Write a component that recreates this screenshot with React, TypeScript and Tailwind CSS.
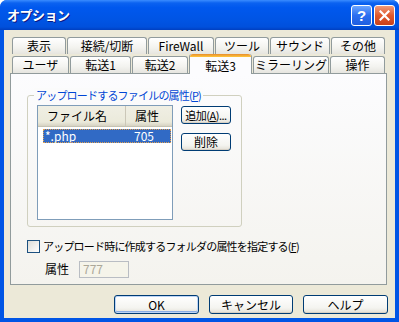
import React from 'react'

const FONT = '[font-family:"Noto_Sans_CJK_JP","Noto_Sans",sans-serif]'

const ROW1 = [
  { label: '表示', w: 'w-[54px]' },
  { label: '接続/切断', w: 'w-[80px]' },
  { label: 'FireWall', w: 'w-[66px]' },
  { label: 'ツール', w: 'w-[54px]' },
  { label: 'サウンド', w: 'w-[60px]' },
  { label: 'その他', w: 'w-[54px]' },
]

const ROW2 = [
  { label: 'ユーザ', w: 'w-[57px]' },
  { label: '転送1', w: 'w-[61px]' },
  { label: '転送2', w: 'w-[56px]' },
  { label: '転送3', w: 'w-[63px]', active: true },
  { label: 'ミラーリング', w: 'w-[76px]' },
  { label: '操作', w: 'w-[55px]' },
]

function Tab({ label, w, active }: { label: string; w: string; active?: boolean }) {
  if (active) {
    return (
      <div className={`${w} relative z-10 -mb-[1px] h-[20px] flex flex-col rounded-t-[3px] border-x border-[#919b9c] bg-[#fcfcfe]`}>
        <div className="h-[3px] rounded-t-[3px] bg-[linear-gradient(to_bottom,#e68b2c,#ffc83c)]" />
        <div className="flex-1 flex items-center justify-center leading-none">{label}</div>
      </div>
    )
  }
  return (
    <div
      className={`${w} h-[17px] flex items-center justify-center rounded-t-[3px] border border-b-0 border-[#919b9c] bg-[linear-gradient(to_bottom,#ffffff,#f3f3ef_60%,#e6e5df)] leading-none`}
    >
      {label}
    </div>
  )
}

function XpButton({ children, className, focused }: { children: React.ReactNode; className: string; focused?: boolean }) {
  return (
    <div
      className={`${className} flex items-center justify-center whitespace-nowrap rounded-[3px] border border-[#003c74] bg-[linear-gradient(to_bottom,#ffffff,#f4f4f0_70%,#e3e0d6)] leading-none ${
        focused ? 'shadow-[inset_0_0_0_1px_#bcd4f6,inset_0_-1px_0_1px_#89ade4]' : 'shadow-[inset_0_-1px_0_#d6d0c5]'
      }`}
    >
      {children}
    </div>
  )
}

export default function App() {
  return (
    <div className={`w-[399px] h-[322px] flex flex-col rounded-t-[7px] bg-[#0055e5] text-[12px] text-black ${FONT}`}>
      {/* Title bar */}
      <div className="h-[30px] flex items-center pl-[7px] pr-[4px] rounded-t-[7px] bg-[linear-gradient(to_bottom,#3a8cff_0%,#0b62f0_10%,#0058ee_25%,#0054e3_70%,#0050dc_90%,#003fc0_100%)]">
        <span className="flex-1 text-white font-bold text-[13px] tracking-[-0.5px] [text-shadow:1px_1px_#0a1883]">オプション</span>
        <div className="w-[21px] h-[21px] rounded-[3px] border border-white bg-[linear-gradient(to_bottom,#6ba5ff,#2b6ef0_50%,#1f5ee0)] flex items-center justify-center text-white font-bold text-[15px] leading-none [font-family:'Liberation_Sans',sans-serif]">
          ?
        </div>
        <div className="ml-[2px] w-[21px] h-[21px] rounded-[3px] border border-white bg-[linear-gradient(to_bottom,#f09a7a,#e0592d_50%,#c8401a)] flex items-center justify-center">
          <svg width="11" height="11" viewBox="0 0 11 11">
            <path d="M1.5 1.5 L9.5 9.5 M9.5 1.5 L1.5 9.5" stroke="white" strokeWidth="2.2" strokeLinecap="square" />
          </svg>
        </div>
      </div>

      {/* Body */}
      <div className="flex-1 mx-[4px] mb-[4px] bg-[#ece9d8] flex flex-col pt-[7px] pl-[6px]">
        <div className="ml-[2px] flex flex-col">
          <div className="flex gap-[1px]">
            {ROW1.map((t) => (
              <Tab key={t.label} label={t.label} w={t.w} />
            ))}
          </div>
          <div className="flex items-end gap-[1px]">
            {ROW2.map((t) => (
              <Tab key={t.label} label={t.label} w={t.w} active={t.active} />
            ))}
          </div>
        </div>

        {/* Tab page */}
        <div className="w-[377px] h-[212px] border border-[#919b9c] bg-[linear-gradient(to_bottom,#fcfcfe,#f4f3ee)] flex flex-col pl-[16px] pt-[21px]">
          {/* Group box */}
          <div className="relative w-[215px] h-[132px] rounded-[3px] border border-[#d0d0bf] flex gap-[8px] pl-[9px] pt-[9px]">
            <span className="absolute -top-[8px] left-[6px] px-[2px] bg-[#fbfbfb] text-[#0046d5] text-[11px] tracking-[-0.8px] leading-[14px] whitespace-nowrap">
              アップロードするファイルの属性(<span className="underline">P</span>)
            </span>
            {/* List view */}
            <div className="w-[136px] h-[115px] border border-[#7f9db9] bg-white flex flex-col">
              <div className="h-[21px] flex bg-[linear-gradient(to_bottom,#f0efe4,#ebeadb_80%,#d6d2c2)] border-b border-[#c5c2b2]">
                <div className="w-[88px] flex items-center pl-[9px] border-r border-[#cbc7b8]">ファイル名</div>
                <div className="flex-1 flex items-center pl-[9px]">属性</div>
              </div>
              <div className="mt-[2px] ml-[5px] w-[128px] h-[14px] flex items-center bg-[#316ac5] text-white outline-1 outline-dotted outline-[#e0a050] -outline-offset-1 leading-none">
                <span className="w-[91px] pl-[2px]">*.php</span>
                <span>705</span>
              </div>
            </div>
            <div className="flex flex-col gap-[9px] pt-[1px]">
              <XpButton className="w-[50px] h-[18px] text-[11px] tracking-[-0.5px]">
                追加(<span className="underline">A</span>)...
              </XpButton>
              <XpButton className="w-[50px] h-[18px]">削除</XpButton>
            </div>
          </div>

          {/* Checkbox row */}
          <div className="mt-[13px] flex items-center gap-[3px]">
            <div className="w-[13px] h-[13px] border border-[#1c5180] bg-[linear-gradient(135deg,#dcdcd7,#ffffff)]" />
            <span className="leading-none text-[11px] tracking-[-0.8px] whitespace-nowrap">
              アップロード時に作成するフォルダの属性を指定する(<span className="underline">F</span>)
            </span>
          </div>

          {/* Attribute row */}
          <div className="mt-[7px] flex items-center">
            <span className="ml-[18px] w-[34px]">属性</span>
            <div className="w-[50px] h-[17px] border border-[#b9bdc3] bg-[#f5f4ea] flex items-center pl-[3px] text-[#aca899] leading-none">
              777
            </div>
          </div>
        </div>

        {/* Dialog buttons */}
        <div className="mt-[10px] flex justify-end gap-[10px] pr-[7px]">
          <XpButton className="w-[85px] h-[19px]" focused>
            OK
          </XpButton>
          <XpButton className="w-[84px] h-[19px]">キャンセル</XpButton>
          <XpButton className="w-[85px] h-[19px]">ヘルプ</XpButton>
        </div>
      </div>
    </div>
  )
}
